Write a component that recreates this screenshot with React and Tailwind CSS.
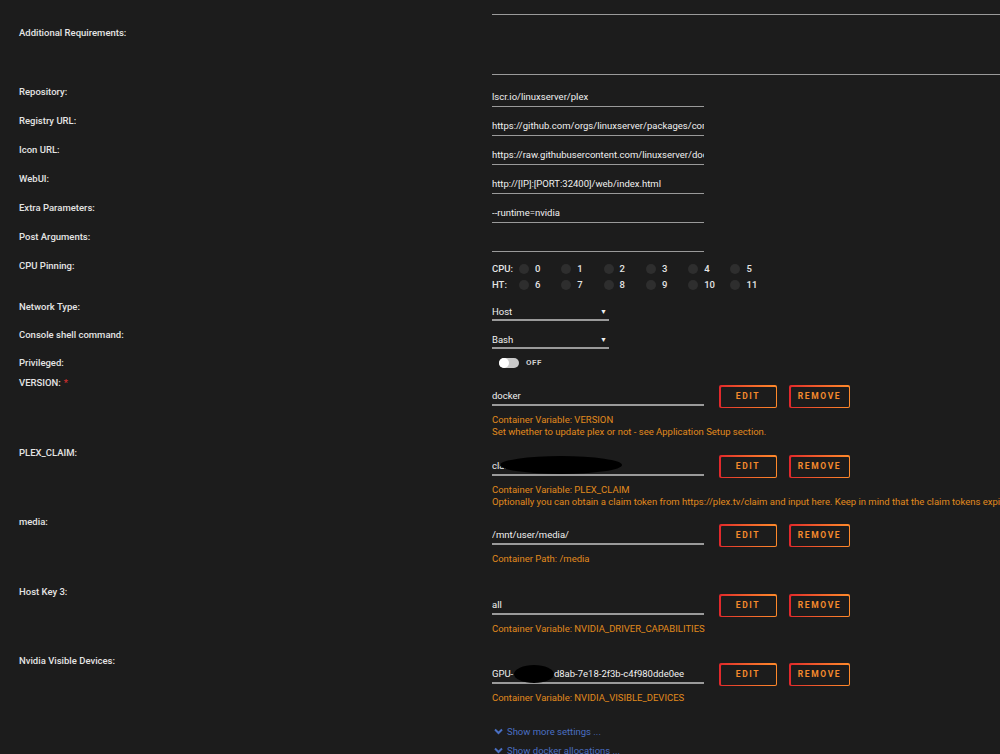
const font = { fontFamily: "Roboto, 'Liberation Sans', sans-serif" };

function Label({ children, req }) {
  return (
    <div className="w-[492px] shrink-0 pl-[19px] text-[9.5px] leading-[14px] font-medium text-[#e4e4e4]">
      {children}
      {req && <span className="ml-[3px] text-[#d32f2f]">*</span>}
    </div>
  );
}

function TextRow({ label, value }) {
  return (
    <div className="flex h-[29px]">
      <Label>{label}</Label>
      <div className="pt-[5px]">
        <div className="w-[212px] overflow-hidden whitespace-nowrap border-b border-[#9a9a9a] pb-[2px] text-[9.5px] leading-[14px] text-[#f0f0f0]">
          {value || "\u00a0"}
        </div>
      </div>
    </div>
  );
}

function SelectRow({ label, value }) {
  return (
    <div className="flex h-[28px]">
      <Label>{label}</Label>
      <div className="pt-[5px]">
        <div className="flex w-[117px] items-center justify-between border-b-2 border-[#9a9a9a] text-[9.5px] leading-[14px] text-[#f0f0f0]">
          <span>{value}</span>
          <span className="pr-[2px] text-[7px]">▼</span>
        </div>
      </div>
    </div>
  );
}

function GradButton({ children, w }) {
  return (
    <div className={`rounded-[2px] bg-gradient-to-r from-[#e0262b] to-[#ff8a2a] p-[1.5px] ${w}`}>
      <div className="flex h-[20px] items-center justify-center rounded-[1px] bg-[#1c1c1c] text-[8.5px] font-bold tracking-[1.6px] text-[#f58a2c]">
        {children}
      </div>
    </div>
  );
}

function VarRow({ label, req, value, desc, h, redact }) {
  return (
    <div className={`flex ${h}`}>
      <Label req={req}>{label}</Label>
      <div className="pt-[9px]">
        <div className="flex items-start">
          <div className="relative pt-[4px]">
            <div className="w-[212px] overflow-hidden whitespace-nowrap border-b-2 border-[#9a9a9a] pb-[1px] text-[9.5px] leading-[14px] text-[#f0f0f0]">
              {value}
            </div>
            {redact}
          </div>
          <div className="ml-[15px] flex gap-[12px]">
            <GradButton w="w-[58px]">EDIT</GradButton>
            <GradButton w="w-[61px]">REMOVE</GradButton>
          </div>
        </div>
        <div className="mt-[6px] whitespace-nowrap text-[9.5px] leading-[12px] text-[#e08a1c]">
          {desc.map((d) => (
            <div key={d}>{d}</div>
          ))}
        </div>
      </div>
    </div>
  );
}

function Chevron() {
  return (
    <svg width="9" height="7" viewBox="0 0 9 7" className="mr-[4px]">
      <path d="M1 1.5 L4.5 5 L8 1.5" stroke="#4a6fc2" strokeWidth="2" fill="none" />
    </svg>
  );
}

export default function App() {
  const cpu = [0, 1, 2, 3, 4, 5];
  const ht = [6, 7, 8, 9, 10, 11];
  return (
    <div className="h-[754px] w-[1000px] overflow-hidden bg-[#1c1c1c]" style={font}>
      {/* previous field bottom line */}
      <div className="flex h-[15px]">
        <div className="w-[492px] shrink-0" />
        <div className="h-[15px] flex-1 border-b border-[#9a9a9a]" />
      </div>
      <div className="flex h-[70px]">
        <div className="pt-[11px]">
          <Label>Additional Requirements:</Label>
        </div>
        <div className="h-[60px] flex-1 border-b border-[#9a9a9a]" />
      </div>

      <TextRow label="Repository:" value="lscr.io/linuxserver/plex" />
      <TextRow label="Registry URL:" value="https://github.com/orgs/linuxserver/packages/container/package/plex" />
      <TextRow label="Icon URL:" value="https://raw.githubusercontent.com/linuxserver/docker-templates/master/linuxserver.io/img/plex-logo.png" />
      <TextRow label="WebUI:" value="http://[IP]:[PORT:32400]/web/index.html" />
      <TextRow label="Extra Parameters:" value="--runtime=nvidia" />
      <TextRow label="Post Arguments:" value="" />

      <div className="flex h-[41px]">
        <Label>CPU Pinning:</Label>
        <div className="pt-[2px] text-[9.5px] font-medium leading-[16px] text-[#e4e4e4]">
          {[["CPU:", cpu], ["HT:", ht]].map(([name, nums]) => (
            <div key={name} className="flex items-center">
              <span className="w-[27px]">{name}</span>
              {nums.map((n) => (
                <div key={n} className="flex w-[42.3px] items-center">
                  <span className="h-[10px] w-[10px] rounded-full bg-[#2e2e2e]" />
                  <span className="ml-[6px]">{n}</span>
                </div>
              ))}
            </div>
          ))}
        </div>
      </div>

      <SelectRow label="Network Type:" value="Host" />
      <SelectRow label="Console shell command:" value="Bash" />

      <div className="flex h-[20px]">
        <Label>Privileged:</Label>
        <div className="mt-[1px] flex h-[11px] items-center pl-[7px]">
          <div className="flex h-[10px] w-[20px] items-center rounded-full bg-[#c9c9c9]">
            <span className="h-[10px] w-[10px] rounded-full bg-white" />
          </div>
          <span className="ml-[7px] text-[8px] font-bold tracking-[0.5px] text-[#d0d0d0]">OFF</span>
        </div>
      </div>

      <VarRow
        label="VERSION:"
        req
        h="h-[70px]"
        value="docker"
        desc={["Container Variable: VERSION", "Set whether to update plex or not - see Application Setup section."]}
      />
      <VarRow
        label="PLEX_CLAIM:"
        h="h-[69px]"
        value="claim-xxxxxxxxxxxxxxxxxxxx"
        redact={<div className="absolute left-[8px] top-[1px] h-[18px] w-[122px] rounded-[50%] bg-black" />}
        desc={[
          "Container Variable: PLEX_CLAIM",
          "Optionally you can obtain a claim token from https://plex.tv/claim and input here. Keep in mind that the claim tokens expire within 4 minutes.",
        ]}
      />
      <VarRow
        label="media:"
        h="h-[70px]"
        value="/mnt/user/media/"
        desc={["Container Path: /media"]}
      />
      <VarRow
        label="Host Key 3:"
        h="h-[69px]"
        value="all"
        desc={["Container Variable: NVIDIA_DRIVER_CAPABILITIES"]}
      />
      <VarRow
        label="Nvidia Visible Devices:"
        h="h-[68px]"
        value={
          <span>
            GPU-<span className="inline-block w-[38px]" />-d8ab-7e18-2f3b-c4f980dde0ee
          </span>
        }
        redact={<div className="absolute left-[22px] top-[2px] h-[18px] w-[40px] rounded-[50%] bg-black" />}
        desc={["Container Variable: NVIDIA_VISIBLE_DEVICES"]}
      />

      <div className="pl-[494px] text-[9.5px] leading-[19px] text-[#4a6fc2]">
        <div className="flex items-center">
          <Chevron />
          Show more settings ...
        </div>
        <div className="flex items-center">
          <Chevron />
          Show docker allocations ...
        </div>
      </div>
    </div>
  );
}
